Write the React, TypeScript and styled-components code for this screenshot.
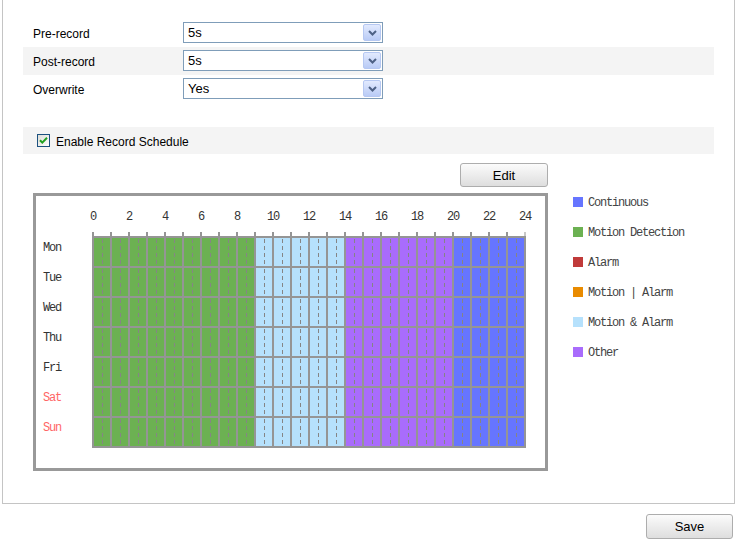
import React from "react";
import styled, { createGlobalStyle } from "styled-components";

const GlobalStyle = createGlobalStyle`
  body {
    margin: 0;
    background: #ffffff;
    font-family: "Liberation Sans", Arial, sans-serif;
    font-size: 12px;
    color: #000000;
  }
`;

const HOUR = 18;
const ROW = 30;
const LINE = "#959595";

const colors = {
  continuous: "#6675ff",
  motion: "#6cb152",
  alarm: "#c03a3a",
  motionOrAlarm: "#e98b00",
  motionAndAlarm: "#b6e1fc",
  other: "#a96cfc",
};

const legend = [
  { label: "Continuous", color: colors.continuous },
  { label: "Motion Detection", color: colors.motion },
  { label: "Alarm", color: colors.alarm },
  { label: "Motion | Alarm", color: colors.motionOrAlarm },
  { label: "Motion & Alarm", color: colors.motionAndAlarm },
  { label: "Other", color: colors.other },
];

const days = [
  { name: "Mon", weekend: false },
  { name: "Tue", weekend: false },
  { name: "Wed", weekend: false },
  { name: "Thu", weekend: false },
  { name: "Fri", weekend: false },
  { name: "Sat", weekend: true },
  { name: "Sun", weekend: true },
];

const hourColor = (h: number) => {
  if (h < 9) return colors.motion;
  if (h < 14) return colors.motionAndAlarm;
  if (h < 20) return colors.other;
  return colors.continuous;
};

const Page = styled.div`
  width: 736px;
`;

const Panel = styled.div`
  margin-left: 2px;
  width: 731px;
  height: 503px;
  border: 1px solid #c4c4c4;
  border-top: none;
`;

const Form = styled.div`
  padding: 19px 20px 0 20px;
`;

const FieldRow = styled.div<{ $shaded?: boolean }>`
  display: flex;
  align-items: flex-start;
  box-sizing: border-box;
  height: 28px;
  padding-top: 3px;
  background: ${(p) => (p.$shaded ? "#f4f4f4" : "transparent")};
`;

const Label = styled.div`
  width: 150px;
  padding: 5px 0 0 10px;
  line-height: 14px;
`;

const Select = styled.div`
  box-sizing: border-box;
  width: 200px;
  height: 21px;
  border: 1px solid #7f9db9;
  background: #ffffff;
  display: flex;
  align-items: center;
  justify-content: space-between;
  padding: 0 1px 0 4px;
  font-size: 13px;
`;

const Arrow = styled.div`
  box-sizing: border-box;
  width: 18px;
  height: 17px;
  border: 1px solid #b6c8f2;
  border-radius: 2px;
  background: linear-gradient(#e2eafe, #b9cbf6);
  display: flex;
  align-items: center;
  justify-content: center;
`;

const CheckRow = styled.div`
  display: flex;
  align-items: center;
  gap: 6px;
  height: 27px;
  margin-top: 24px;
  padding-left: 14px;
  background: #f4f4f4;
`;

const CheckText = styled.span`
  padding-top: 3px;
`;

const Schedule = styled.div`
  margin: 9px 0 0 10px;
`;

const EditBar = styled.div`
  width: 515px;
  display: flex;
  justify-content: flex-end;
`;

const Button = styled.button<{ $w: number; $h: number }>`
  box-sizing: border-box;
  width: ${(p) => p.$w}px;
  height: ${(p) => p.$h}px;
  border: 1px solid #adadad;
  border-radius: 3px;
  background: linear-gradient(#fbfbfb, #dedede);
  font-family: "Liberation Sans", Arial, sans-serif;
  font-size: 13px;
  color: #000000;
  padding: 0;
`;

const ScheduleBody = styled.div`
  display: flex;
  align-items: flex-start;
  gap: 24px;
  margin-top: 6px;
`;

const ChartBox = styled.div`
  box-sizing: border-box;
  width: 515px;
  border: 3px solid #999999;
  padding: 0 19px 20px 7px;
  font-family: "Liberation Mono", "Courier New", monospace;
  font-size: 12px;
  letter-spacing: -1.2px;
  color: #333333;
`;

const HourScale = styled.div`
  display: flex;
  height: 36px;
  box-sizing: border-box;
  padding-top: 14px;
  margin-left: 32px;
`;

const HourLabel = styled.div`
  flex: 0 0 36px;
  text-align: center;
  line-height: 14px;
`;

const ChartRow = styled.div`
  display: flex;
`;

const DayColumn = styled.div`
  width: 49px;
  padding-top: 4px;
`;

const DayLabel = styled.div<{ $weekend: boolean }>`
  height: ${ROW}px;
  box-sizing: border-box;
  padding-top: 5px;
  line-height: 14px;
  color: ${(p) => (p.$weekend ? "#ff6666" : "#333333")};
`;

const Legend = styled.div`
  padding: 4px 0 0 1px;
  display: flex;
  flex-direction: column;
  gap: 20px;
  font-family: "Liberation Mono", "Courier New", monospace;
  font-size: 12px;
  letter-spacing: -1.2px;
  color: #444444;
`;

const LegendItem = styled.div`
  display: flex;
  align-items: center;
  gap: 5px;
  height: 10px;
  white-space: pre;
`;

const LegendText = styled.span`
  padding-top: 2px;
`;

const Swatch = styled.span<{ $color: string }>`
  flex: 0 0 10px;
  height: 10px;
  background: ${(p) => p.$color};
`;

const Footer = styled.div`
  display: flex;
  justify-content: flex-end;
  padding: 10px 3px 0 0;
`;

const Chevron = () => (
  <svg width="9" height="6" viewBox="0 0 9 6">
    <path d="M1 1 L4.5 4.5 L8 1" fill="none" stroke="#4d6185" strokeWidth="2" />
  </svg>
);

const CheckBox = () => (
  <svg width="13" height="13" viewBox="0 0 13 13">
    <defs>
      <linearGradient id="cb" x1="0" y1="0" x2="1" y2="1">
        <stop offset="0" stopColor="#dcdcd6" />
        <stop offset="1" stopColor="#ffffff" />
      </linearGradient>
    </defs>
    <rect x="0.5" y="0.5" width="12" height="12" fill="url(#cb)" stroke="#1c5180" />
    <path d="M3 6.2 L5.3 8.6 L10 3.8" fill="none" stroke="#21a121" strokeWidth="2" />
  </svg>
);

const ScheduleGrid = () => {
  const width = 24 * HOUR + 2;
  const height = 4 + 7 * ROW + 2;
  const hours = Array.from({ length: 24 }, (_, h) => h);
  return (
    <svg width={width} height={height} viewBox={`0 0 ${width} ${height}`}>
      {Array.from({ length: 25 }, (_, h) => (
        <rect key={`t${h}`} x={h * HOUR} y={0} width={2} height={4} fill={h === 24 ? "#c8c8c8" : LINE} />
      ))}
      <rect x={0} y={4} width={width} height={height - 4} fill={LINE} />
      {days.map((_, d) =>
        hours.map((h) => {
          const x = h * HOUR + 2;
          const y = 4 + d * ROW + 2;
          return (
            <g key={`${d}-${h}`}>
              <rect x={x} y={y} width={HOUR - 2} height={ROW - 2} fill={hourColor(h)} />
              <line
                x1={x + 8.5}
                x2={x + 8.5}
                y1={y + 1}
                y2={y + ROW - 2}
                stroke="#858585"
                strokeWidth={1}
                strokeDasharray="4 3"
              />
            </g>
          );
        })
      )}
    </svg>
  );
};

const Field = ({ label, value, shaded }: { label: string; value: string; shaded?: boolean }) => (
  <FieldRow $shaded={shaded}>
    <Label>{label}</Label>
    <Select>
      <span>{value}</span>
      <Arrow>
        <Chevron />
      </Arrow>
    </Select>
  </FieldRow>
);

const App = () => {
  return (
    <Page>
      <GlobalStyle />
      <Panel>
        <Form>
          <Field label="Pre-record" value="5s" />
          <Field label="Post-record" value="5s" shaded />
          <Field label="Overwrite" value="Yes" />
          <CheckRow>
            <CheckBox />
            <CheckText>Enable Record Schedule</CheckText>
          </CheckRow>
          <Schedule>
            <EditBar>
              <Button $w={88} $h={24}>Edit</Button>
            </EditBar>
            <ScheduleBody>
              <ChartBox>
                <HourScale>
                  {Array.from({ length: 13 }, (_, i) => (
                    <HourLabel key={i}>{i * 2}</HourLabel>
                  ))}
                </HourScale>
                <ChartRow>
                  <DayColumn>
                    {days.map((d) => (
                      <DayLabel key={d.name} $weekend={d.weekend}>
                        {d.name}
                      </DayLabel>
                    ))}
                  </DayColumn>
                  <ScheduleGrid />
                </ChartRow>
              </ChartBox>
              <Legend>
                {legend.map((l) => (
                  <LegendItem key={l.label}>
                    <Swatch $color={l.color} />
                    <LegendText>{l.label}</LegendText>
                  </LegendItem>
                ))}
              </Legend>
            </ScheduleBody>
          </Schedule>
        </Form>
      </Panel>
      <Footer>
        <Button $w={87} $h={25}>Save</Button>
      </Footer>
    </Page>
  );
};

export default App;
